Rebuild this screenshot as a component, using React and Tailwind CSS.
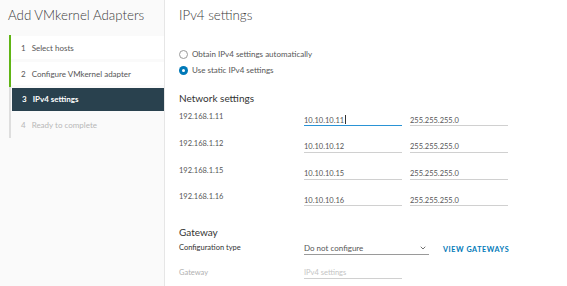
import { ChevronDown } from "lucide-react";

const steps = [
  { n: 1, label: "Select hosts", state: "done" },
  { n: 2, label: "Configure VMkernel adapter", state: "done" },
  { n: 3, label: "IPv4 settings", state: "active" },
  { n: 4, label: "Ready to complete", state: "todo" },
];

const hosts = [
  { host: "192.168.1.11", ip: "10.10.10.11", mask: "255.255.255.0", focus: true },
  { host: "192.168.1.12", ip: "10.10.10.12", mask: "255.255.255.0" },
  { host: "192.168.1.15", ip: "10.10.10.15", mask: "255.255.255.0" },
  { host: "192.168.1.16", ip: "10.10.10.16", mask: "255.255.255.0" },
];

function Step({ step }) {
  const border =
    step.state === "done" ? "border-[#60b515]" : "border-[#dedede]";
  let row = "bg-white text-[#565656]";
  if (step.state === "active") row = "bg-[#29414e] text-white font-bold ml-[1px]";
  if (step.state === "todo") row = "bg-transparent text-[#b8b8b8]";
  return (
    <div className={`border-l-2 ${border} py-[1.4px]`}>
      <div className={`h-[23px] flex items-center pl-[10px] gap-[6px] text-[8px] ${row}`}>
        <span>{step.n}</span>
        <span>{step.label}</span>
      </div>
    </div>
  );
}

function Field({ value, focus, placeholder }) {
  return (
    <div
      className={`h-[12px] flex items-end pb-[1px] text-[7.5px] leading-none ${
        focus ? "border-b border-[#2a93d5]" : "border-b-[1.5px] border-[#d0d0d0]"
      } ${placeholder ? "text-[#c4c4c4]" : "text-[#565656]"}`}
    >
      <span>{value || placeholder}</span>
      {focus && <span className="ml-[1px] w-[1px] h-[9px] bg-[#333]" />}
    </div>
  );
}

export default function App() {
  return (
    <div
      className="w-[567px] h-[286px] flex bg-white overflow-hidden"
      style={{ fontFamily: "Lato, 'Noto Sans', sans-serif" }}
    >
      {/* wizard steps */}
      <div className="w-[165px] shrink-0 bg-[#fafafa] border-r border-[#e6e6e6]">
        <h1 className="pl-[8px] pt-[5px] text-[13.3px] leading-[20px] text-[#3a3a3a] font-light">
          Add VMkernel Adapters
        </h1>
        <div className="ml-[9px] mt-[10px]">
          {steps.map((s) => (
            <Step key={s.n} step={s} />
          ))}
        </div>
      </div>

      {/* content */}
      <div className="flex-1 pl-[14px]">
        <h2 className="pt-[5px] text-[13.3px] leading-[20px] text-[#3a3a3a] font-light">
          IPv4 settings
        </h2>

        <div className="mt-[24px] flex flex-col gap-[6px] text-[8px] text-[#565656]">
          <label className="flex items-center gap-[4px] h-[10px]">
            <span className="w-[9px] h-[9px] rounded-full border border-[#9a9a9a] bg-white" />
            Obtain IPv4 settings automatically
          </label>
          <label className="flex items-center gap-[4px] h-[10px]">
            <span className="w-[9px] h-[9px] rounded-full bg-[#0079b8] flex items-center justify-center">
              <span className="w-[3px] h-[3px] rounded-full bg-white" />
            </span>
            Use static IPv4 settings
          </label>
        </div>

        <h3 className="mt-[16px] text-[10px] leading-[14px] text-[#333]">Network settings</h3>

        <div className="mt-[7px] flex flex-col">
          {hosts.map((h) => (
            <div
              key={h.host}
              className="grid grid-cols-[117px_98px_98px] gap-x-[8px] h-[26.8px] items-start"
            >
              <span className="text-[7.5px] leading-[10px] text-[#565656]">{h.host}</span>
              <div className="pt-[2px]">
                <Field value={h.ip} focus={h.focus} />
              </div>
              <div className="pt-[2px]">
                <Field value={h.mask} />
              </div>
            </div>
          ))}
        </div>

        <h3 className="mt-[6px] text-[10px] leading-[14px] text-[#333]">Gateway</h3>

        <div className="mt-[1px] grid grid-cols-[125px_125px_auto] items-center">
          <span className="text-[7.5px] text-[#333]">Configuration type</span>
          <div className="h-[14px] flex items-center justify-between border-b border-[#9a9a9a] text-[8px] text-[#565656]">
            <span>Do not configure</span>
            <ChevronDown className="w-[8px] h-[8px] mr-[2px]" strokeWidth={2.5} />
          </div>
          <span className="ml-[14px] mt-[5px] text-[7.2px] font-bold tracking-[0.08em] text-[#0079b8]">
            VIEW GATEWAYS
          </span>
        </div>

        <div className="mt-[11px] grid grid-cols-[125px_98px] items-center">
          <span className="text-[7.5px] text-[#b0b0b0]">Gateway</span>
          <Field placeholder="IPv4 settings" />
        </div>
      </div>
    </div>
  );
}
